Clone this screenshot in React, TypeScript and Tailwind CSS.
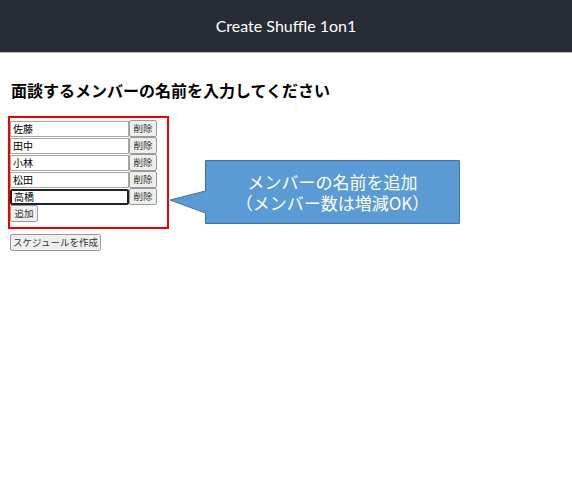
import React, { useState } from 'react';

const jp = { fontFamily: '"Noto Sans CJK JP", "Noto Sans", sans-serif' };

const btn =
  'block h-[17px] px-0 text-[9.5px] leading-none whitespace-nowrap text-[#333] bg-[#efefef] border border-[#9a9a9a] rounded-[2px]';

export default function App() {
  const [members, setMembers] = useState<string[]>(['佐藤', '田中', '小林', '松田', '高橋']);

  const update = (i: number, v: string) => {
    const next = [...members];
    next[i] = v;
    setMembers(next);
  };

  return (
    <div className="relative w-[572px] h-[501px] bg-white overflow-hidden" style={jp}>
      <header className="h-[53px] bg-[#282c34] border-b border-[#b8b8b8] flex items-center justify-center">
        <span className="text-white text-[16px]" style={{ fontFamily: 'Lato, "Open Sans", sans-serif' }}>
          Create Shuffle 1on1
        </span>
      </header>

      <main className="px-[10px] pt-[25px]">
        <h2 className="text-[16px] font-bold text-black leading-[24px] pl-[1px]">
          面談するメンバーの名前を入力してください
        </h2>

        <div className="mt-[14px] ml-[-2px] w-[161px] border-2 border-[#ee0000] pt-[2px] pb-[5px]">
          <div className="flex flex-col">
            {members.map((m, i) => (
              <div key={i} className="flex items-center h-[17px]">
                <input
                  value={m}
                  onChange={(e) => update(i, e.target.value)}
                  className={
                    i === members.length - 1
                      ? 'w-[119px] h-[16px] px-[2px] text-[10px] text-black bg-white border-2 border-[#222] rounded-[2px] outline-none'
                      : 'w-[119px] h-[16px] px-[2px] text-[10px] text-black bg-white border border-[#a8a8a8] outline-none'
                  }
                />
                <button onClick={() => setMembers(members.filter((_, j) => j !== i))} className={`w-[28px] ${btn}`}>
                  削除
                </button>
              </div>
            ))}
          </div>
          <button onClick={() => setMembers([...members, ''])} className={`w-[28px] ${btn}`}>
            追加
          </button>
        </div>

        <button className={`mt-[5px] w-[91px] ${btn}`}>スケジュールを作成</button>
      </main>

      {/* annotation callout */}
      <svg className="absolute left-0 top-0 pointer-events-none" width="572" height="501">
        <path
          d="M205.5 160.5 H459.5 V223.5 H205.5 V213 L170 200 L205.5 191 Z"
          fill="#5b9bd5"
          stroke="#41719c"
          strokeWidth="1"
        />
      </svg>
      <div className="absolute left-[206px] top-[161px] w-[253px] h-[62px] flex flex-col items-center justify-center text-white text-[17px] leading-[21px] pointer-events-none">
        <span>メンバーの名前を追加</span>
        <span>（メンバー数は増減OK）</span>
      </div>
    </div>
  );
}
